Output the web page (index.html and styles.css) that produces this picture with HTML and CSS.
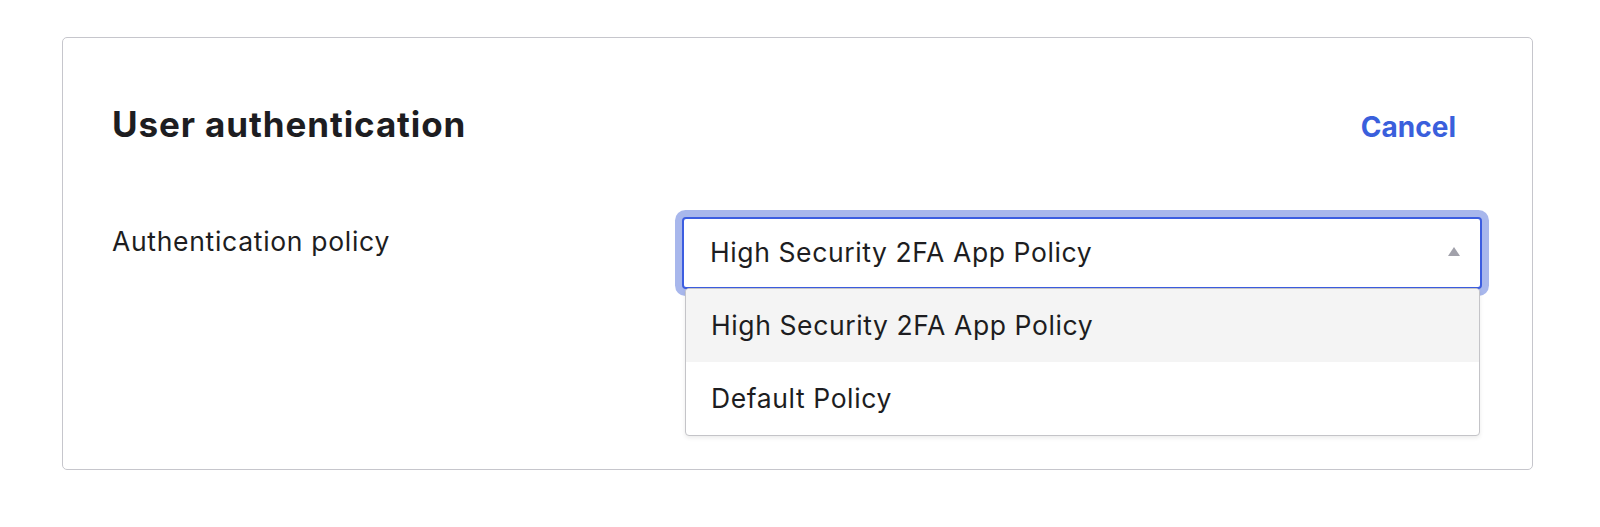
FILE: index.html
```html
<!DOCTYPE html>
<html lang="en">
<head>
<meta charset="utf-8">
<title>User authentication</title>
<link rel="stylesheet" href="styles.css">
</head>
<body>
<div class="page">
  <section class="card">
    <header class="card-header">
      <h2 class="card-title">User authentication</h2>
      <a class="cancel" href="#">Cancel</a>
    </header>
    <div class="form-row">
      <label class="field-label">Authentication policy</label>
      <div class="select-wrap">
        <div class="select">
          <span class="select-value">High Security 2FA App Policy</span>
          <span class="caret"></span>
        </div>
        <ul class="menu">
          <li class="menu-item is-active">High Security 2FA App Policy</li>
          <li class="menu-item">Default Policy</li>
        </ul>
      </div>
    </div>
  </section>
</div>
</body>
</html>
```

FILE: styles.css
```css
* { box-sizing: border-box; }
html, body { margin: 0; padding: 0; background: #fff; }
body {
  font-family: Inter, "Noto Sans", "Liberation Sans", sans-serif;
  color: #1d1d21;
}
.page {
  padding: 37px 0 0 62px;
}
.card {
  width: 1471px;
  height: 433px;
  border: 1px solid #c6c6cc;
  border-radius: 5px;
  padding: 66px 50px 0 49px;
}
.card-header {
  display: flex;
  justify-content: space-between;
  align-items: baseline;
}
.card-title {
  margin: 0;
  font-size: 35px;
  line-height: 40px;
  font-weight: 700;
  letter-spacing: 0.9px;
}
.cancel {
  font-size: 28px;
  line-height: 40px;
  font-weight: 700;
  color: #3a5fdc;
  text-decoration: none;
  padding: 0 26px;
}
.form-row {
  display: grid;
  grid-template-columns: 1fr 800px;
  margin-top: 70px;
}
.field-label {
  font-size: 26.5px;
  line-height: 32px;
  letter-spacing: 0.7px;
  margin-top: 8px;
}
.select-wrap {
  position: relative;
}
.select {
  height: 72px;
  border: 2px solid #3c5de0;
  border-radius: 4px;
  box-shadow: 0 0 0 7px #a8b7ec;
  display: flex;
  align-items: center;
  justify-content: space-between;
  padding: 0 20px 2px 26px;
  background: #fff;
}
.select-value {
  font-size: 26.5px;
  line-height: 32px;
  letter-spacing: 0.6px;
}
.caret {
  width: 0;
  height: 0;
  border-left: 6px solid transparent;
  border-right: 6px solid transparent;
  border-bottom: 9px solid #a1a1aa;
  margin-bottom: 1px;
}
.menu {
  position: absolute;
  top: 71px;
  left: 3px;
  right: 2px;
  margin: 0;
  padding: 0;
  list-style: none;
  background: #fff;
  border: 1px solid #c4c4c8;
  border-radius: 4px;
  box-shadow: 0 2px 4px rgba(0, 0, 0, 0.08);
  overflow: hidden;
}
.menu-item {
  height: 73px;
  display: flex;
  align-items: center;
  padding: 0 0 2px 25px;
  font-size: 26.5px;
  line-height: 32px;
  letter-spacing: 0.6px;
}
.menu-item.is-active {
  background: #f4f4f4;
}
```
